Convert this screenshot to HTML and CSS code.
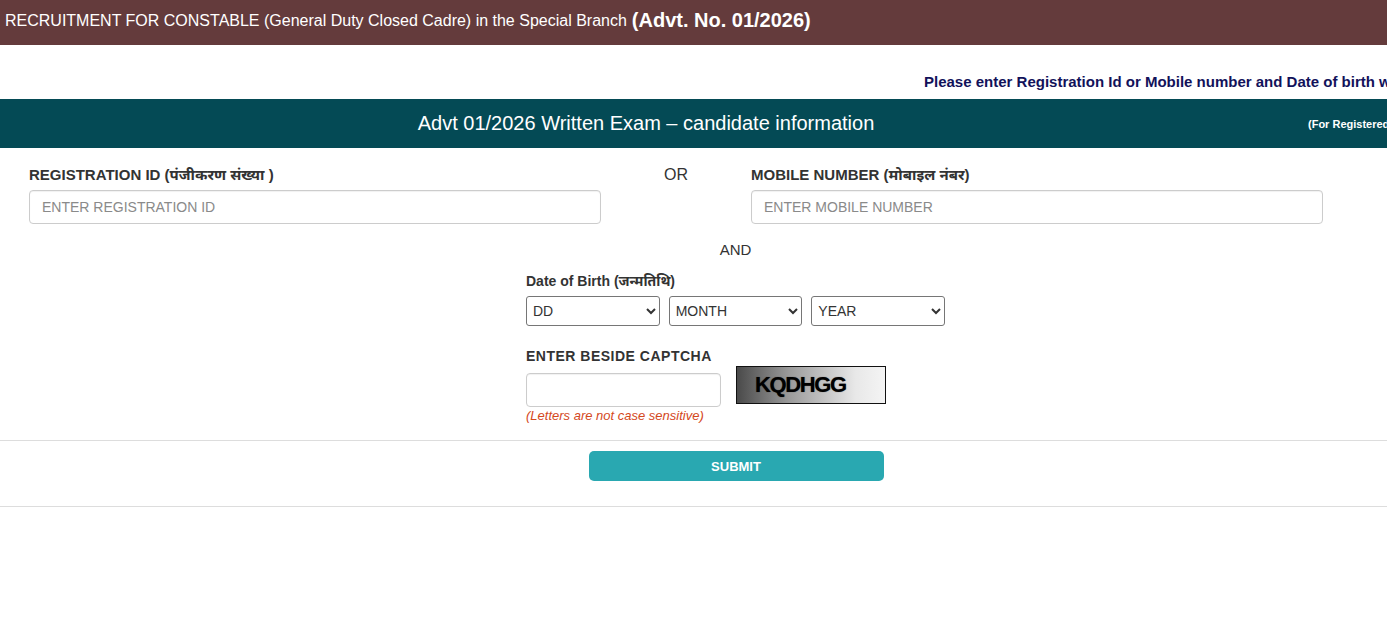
FILE: index.html
```html
<!DOCTYPE html>
<html lang="en">
<head>
<meta charset="utf-8">
<title>Advt 01/2026 Written Exam – candidate information</title>
<link rel="stylesheet" href="styles.css">
</head>
<body>
<header class="topbar">
  <span class="topbar-text">RECRUITMENT FOR CONSTABLE (General Duty Closed Cadre) in the Special Branch</span>
  <strong class="topbar-advt">(Advt. No. 01/2026)</strong>
</header>
<div class="notice">
  <span class="notice-text">Please enter Registration Id or Mobile number and Date of birth with captcha</span>
</div>
<div class="titlebar">
  <div class="titlebar-main">Advt 01/2026 Written Exam – candidate information</div>
  <div class="titlebar-note">(For Registered Candidates)</div>
</div>
<form class="form">
  <div class="id-row">
    <div class="field">
      <label class="label">REGISTRATION ID (पंजीकरण संख्या )</label>
      <input class="text-input" type="text" placeholder="ENTER REGISTRATION ID">
    </div>
    <div class="or">OR</div>
    <div class="field">
      <label class="label">MOBILE NUMBER (मोबाइल नंबर)</label>
      <input class="text-input" type="text" placeholder="ENTER MOBILE NUMBER">
    </div>
  </div>
  <div class="center-block">
    <div class="and">AND</div>
    <div class="dob-label">Date of Birth (जन्मतिथि)</div>
    <div class="dob-row">
      <select class="sel"><option>DD</option></select>
      <select class="sel"><option>MONTH</option></select>
      <select class="sel"><option>YEAR</option></select>
    </div>
    <div class="captcha-label">ENTER BESIDE CAPTCHA</div>
    <div class="captcha-row">
      <div class="captcha-col">
        <input class="captcha-input" type="text">
        <div class="captcha-note">(Letters are not case sensitive)</div>
      </div>
      <div class="captcha-img"><span class="captcha-code">KQDHGG</span></div>
    </div>
  </div>
  <div class="submit-row">
    <button class="submit" type="button">SUBMIT</button>
  </div>
</form>
</body>
</html>
```

FILE: styles.css
```css
html, body {
  margin: 0;
  padding: 0;
  background: #ffffff;
  font-family: "Liberation Sans", Arial, "Noto Sans", sans-serif;
  color: #333333;
  overflow: hidden;
}

.topbar {
  height: 45px;
  background: #643b3c;
  color: #ffffff;
  display: flex;
  align-items: center;
  padding-left: 5px;
  padding-bottom: 4px;
  box-sizing: border-box;
  gap: 5px;
  white-space: nowrap;
}

.topbar-text {
  font-size: 16px;
}

.topbar-advt {
  font-size: 20px;
  font-weight: bold;
}

.notice {
  height: 54px;
  display: flex;
  align-items: center;
  padding-left: 924px;
  padding-top: 18px;
  box-sizing: border-box;
  white-space: nowrap;
  overflow: hidden;
}

.notice-text {
  color: #12125a;
  font-size: 15px;
  font-weight: bold;
}

.titlebar {
  height: 49px;
  background: #044a55;
  color: #ffffff;
  display: grid;
  grid-template-columns: 1292px 1fr;
  align-items: center;
  white-space: nowrap;
  overflow: hidden;
}

.titlebar-main {
  text-align: center;
  font-size: 20px;
}

.titlebar-note {
  padding-left: 16px;
  font-size: 11px;
  font-weight: bold;
  overflow: hidden;
}

.form {
  margin: 0;
}

.id-row {
  display: grid;
  grid-template-columns: 572px 150px 572px;
  padding: 18px 0 0 29px;
}

.field {
  display: flex;
  flex-direction: column;
  gap: 7px;
}

.label {
  font-size: 15px;
  font-weight: bold;
  color: #333333;
  line-height: 17px;
}

.text-input {
  box-sizing: border-box;
  height: 34px;
  border: 1px solid #cccccc;
  border-radius: 4px;
  padding: 0 12px;
  font-family: "Liberation Sans", Arial, sans-serif;
  font-size: 14px;
  color: #555555;
  box-shadow: inset 0 1px 1px rgba(0, 0, 0, 0.06);
}

.text-input::placeholder {
  color: #8a8a8a;
}

.or {
  text-align: center;
  font-size: 16px;
  line-height: 17px;
  color: #333333;
}

.center-block {
  margin-left: 526px;
  width: 419px;
  display: flex;
  flex-direction: column;
}

.and {
  text-align: center;
  font-size: 15px;
  line-height: 17px;
  margin-top: 17px;
  color: #333333;
}

.dob-label {
  margin-top: 15px;
  font-size: 14px;
  font-weight: bold;
  line-height: 17px;
}

.dob-row {
  display: flex;
  gap: 9px;
  margin-top: 6px;
}

.sel {
  box-sizing: border-box;
  width: 134px;
  height: 30px;
  border: 1px solid #767676;
  border-radius: 3px;
  background: #ffffff;
  font-family: "Liberation Sans", Arial, sans-serif;
  font-size: 14px;
  color: #333333;
  padding-left: 2px;
}

.captcha-label {
  margin-top: 22px;
  font-size: 14px;
  font-weight: bold;
  line-height: 17px;
  letter-spacing: 0.5px;
}

.captcha-row {
  display: flex;
  gap: 16px;
  align-items: flex-start;
}

.captcha-col {
  display: flex;
  flex-direction: column;
  margin-top: 8px;
}

.captcha-input {
  box-sizing: border-box;
  width: 195px;
  height: 34px;
  border: 1px solid #cccccc;
  border-radius: 4px;
  box-shadow: inset 0 1px 1px rgba(0, 0, 0, 0.06);
}

.captcha-note {
  margin-top: 2px;
  font-size: 13px;
  font-style: italic;
  color: #d4481c;
  line-height: 14px;
}

.captcha-img {
  box-sizing: border-box;
  width: 150px;
  height: 38px;
  margin-top: 1px;
  margin-left: -1px;
  border: 1px solid #111111;
  background: linear-gradient(to right, #4a4a4a 0%, #9a9a9a 35%, #e8e8e8 80%, #f4f4f4 100%);
  display: flex;
  align-items: center;
  padding-left: 18px;
}

.captcha-code {
  font-size: 22px;
  font-weight: bold;
  letter-spacing: -1.4px;
  color: #000000;
  text-shadow: 0 0 1px rgba(0, 0, 0, 0.6);
}

.submit-row {
  margin-top: 17px;
  border-top: 1px solid #dddddd;
  border-bottom: 1px solid #dddddd;
  height: 67px;
  display: flex;
  justify-content: center;
  align-items: flex-start;
  padding-top: 10px;
  box-sizing: border-box;
}

.submit {
  width: 295px;
  height: 30px;
  margin-left: 85px;
  border: none;
  border-radius: 5px;
  background: #29a8b1;
  color: #ffffff;
  font-family: "Liberation Sans", Arial, sans-serif;
  font-size: 13px;
  font-weight: bold;
}
```
